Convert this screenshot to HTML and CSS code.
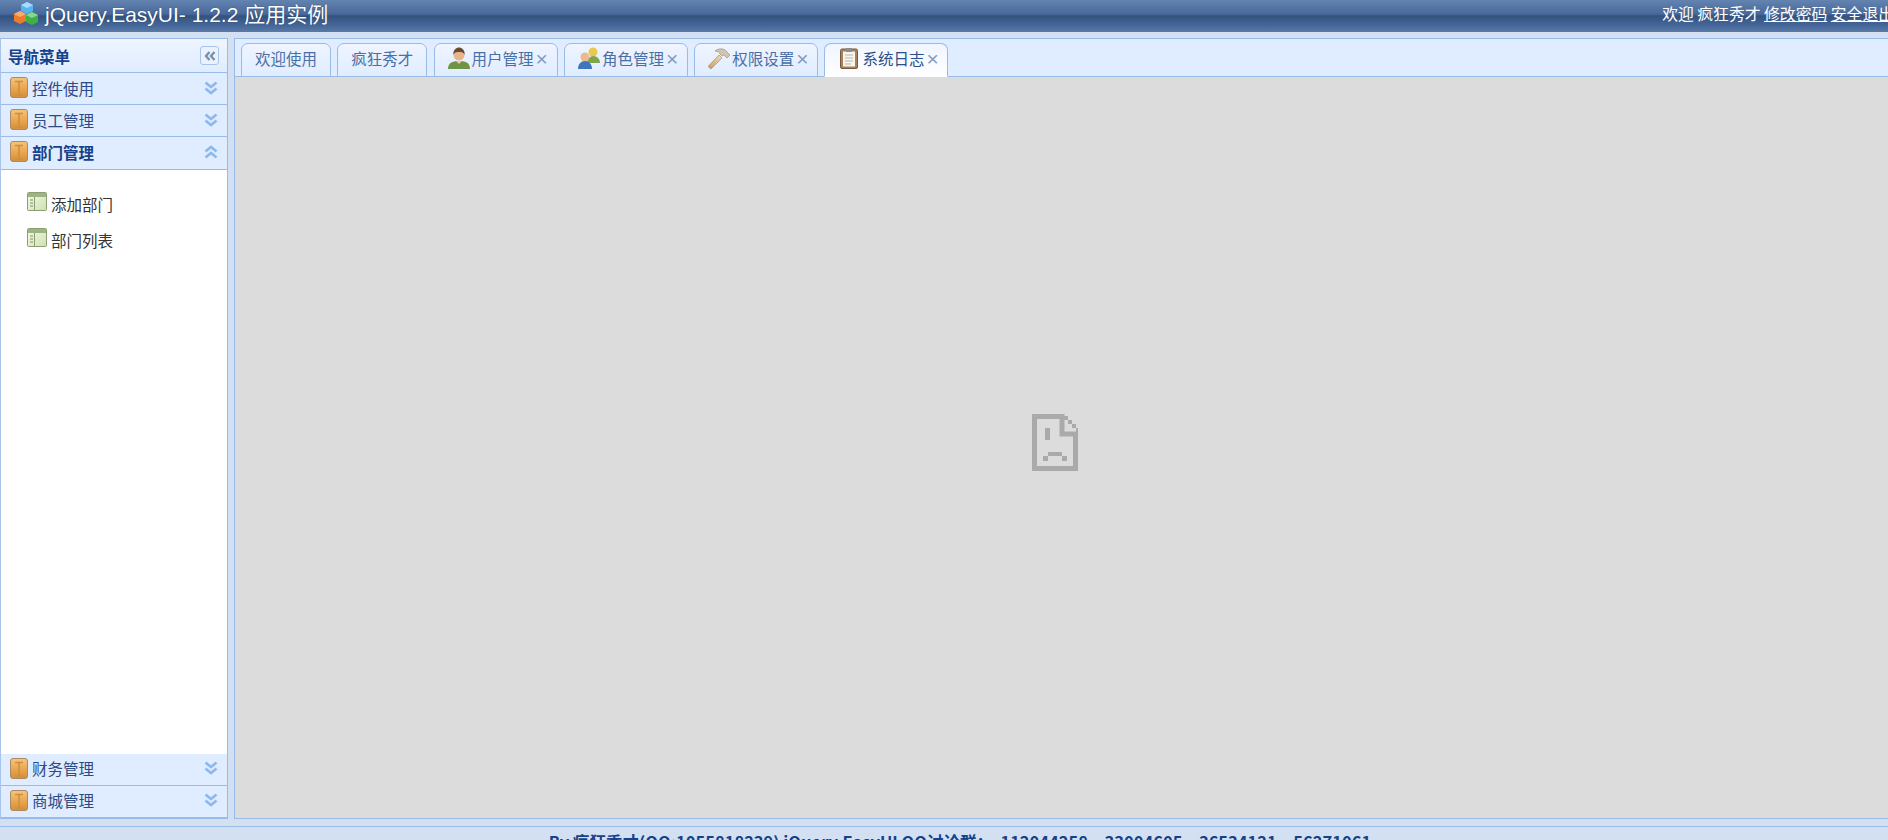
FILE: index.html
```html
<!DOCTYPE html>
<html lang="zh-CN">
<head>
    <meta charset="UTF-8">
    <title>jQuery.EasyUI- 1.2.2 应用实例</title>
    <link rel="stylesheet" href="styles.css">
</head>
<body>
    <svg class="icon-defs" width="0" height="0">
        <defs>
            <linearGradient id="boxFill" x1="0" y1="0" x2="0" y2="1">
                <stop offset="0" stop-color="#f3c67f"/>
                <stop offset="0.6" stop-color="#e8a24a"/>
                <stop offset="1" stop-color="#cf9040"/>
            </linearGradient>
            <linearGradient id="tableFill" x1="0" y1="0" x2="1" y2="1">
                <stop offset="0" stop-color="#f6fae9"/>
                <stop offset="1" stop-color="#cfe0b0"/>
            </linearGradient>
            <linearGradient id="handleFill" x1="0" y1="1" x2="1" y2="0">
                <stop offset="0" stop-color="#c49a68"/>
                <stop offset="1" stop-color="#f3dcb6"/>
            </linearGradient>
            <symbol id="i-box" viewBox="0 0 18 21">
                <rect x="0.5" y="0.5" width="17" height="20" rx="2.5" fill="url(#boxFill)" stroke="#a98a62"/>
                <path d="M5 4.5h8M9 4.5V18" stroke="#cf8c3a" stroke-width="1.5" fill="none"/>
                <path d="M5.5 18h7" stroke="#cf8c3a" fill="none"/>
            </symbol>
            <symbol id="i-table" viewBox="0 0 20 19">
                <rect x="0.5" y="0.5" width="19" height="18" rx="1" fill="url(#tableFill)" stroke="#8aa074"/>
                <rect x="1" y="1" width="18" height="4" fill="#9db583"/>
                <path d="M7.5 5v13" stroke="#8aa074"/>
                <path d="M3 8h3M3 11h3M3 14h3" stroke="#7c9566"/>
            </symbol>
            <symbol id="i-down" viewBox="0 0 14 14">
                <path d="M1.5 1.5L7 6l5.5-4.5M1.5 7.5L7 12l5.5-4.5" fill="none" stroke="#8db8ee" stroke-width="2.6"/>
            </symbol>
            <symbol id="i-up" viewBox="0 0 14 14">
                <path d="M1.5 6.5L7 2l5.5 4.5M1.5 12.5L7 8l5.5 4.5" fill="none" stroke="#8db8ee" stroke-width="2.6"/>
            </symbol>
            <symbol id="i-user" viewBox="0 0 22 22">
                <path d="M0 22c0-6 4-8 11-8s11 2 11 8z" fill="#6f9444"/>
                <path d="M8 14l3 3 3-3z" fill="#e9c9a6"/>
                <circle cx="11" cy="8" r="5.5" fill="#e7b48c"/>
                <path d="M5.5 8c-1-5 3-7.5 5.5-7.5S17.5 3 16.5 8c-1-3-3-3-5.5-3s-4.5 0-5.5 3z" fill="#6b4a33"/>
            </symbol>
            <symbol id="i-users" viewBox="0 0 22 22">
                <circle cx="15" cy="5" r="4.5" fill="#e9c94f"/>
                <path d="M9 16c0-4 3-7 6.5-7s6.5 3 6.5 7z" fill="#7fa54a"/>
                <circle cx="7" cy="10" r="4.5" fill="#ecb98f"/>
                <path d="M0 22c0-5 3-8 7-8s7 3 7 8z" fill="#3d76bd"/>
            </symbol>
            <symbol id="i-hammer" viewBox="0 0 22 22">
                <path d="M0 19.5L11 8l3 3L3 22z" fill="url(#handleFill)" stroke="#a98455" stroke-width="0.6"/>
                <path d="M7 4c4-3 9-3 12 1l3 3-3 3-3-3-2 1-2-2c0-1-2-3-5-3z" fill="#cfc6b0" stroke="#8f8974" stroke-width="0.6"/>
            </symbol>
            <symbol id="i-clip" viewBox="0 0 18 22">
                <rect x="0.5" y="2" width="17" height="19.5" rx="1.5" fill="#a8805a" stroke="#7a5a3c"/>
                <rect x="3" y="4.5" width="12" height="15" fill="#f8f6ec"/>
                <path d="M5 8h8M5 11h8M5 14h8M5 17h6" stroke="#b5b5aa"/>
                <rect x="6" y="1" width="6" height="4" fill="#8c8c8c"/>
            </symbol>
        </defs>
    </svg>

    <!-- 顶部 -->
    <div class="top-bar">
        <div class="brand">
            <svg class="logo" viewBox="0 0 28 26" width="28" height="26">
                <path d="M15 1l6 3v6l-6 3-6-3V4z" fill="#58b4ee"/>
                <path d="M8 10l6 3v7l-6 3-6-3v-7z" fill="#ec7b2e"/>
                <path d="M20 11l6 3v7l-6 3-6-3v-7z" fill="#3fb048"/>
                <path d="M15 1l6 3-6 3-6-3z" fill="#a6dcf7"/>
                <path d="M8 10l6 3-6 3-6-3z" fill="#f7ad6f"/>
                <path d="M20 11l6 3-6 3-6-3z" fill="#86d98c"/>
            </svg>
            <span class="brand-text">jQuery.EasyUI- 1.2.2 应用实例</span>
        </div>
        <div class="user-links">欢迎 疯狂秀才 <a href="#">修改密码</a> <a href="#">安全退出</a></div>
    </div>

    <div class="workspace">
        <!-- 左侧导航 -->
        <div class="side-panel">
            <div class="side-title">
                <span>导航菜单</span>
                <span class="collapse-btn">
                    <svg viewBox="0 0 12 10" width="12" height="10"><path d="M5.5 1L2 5l3.5 4M10.5 1L7 5l3.5 4" fill="none" stroke="#7b8fa8" stroke-width="2.4"/></svg>
                </span>
            </div>
            <div class="acc-head"><svg class="acc-icon"><use href="#i-box"/></svg><span>控件使用</span><svg class="acc-arrow"><use href="#i-down"/></svg></div>
            <div class="acc-head"><svg class="acc-icon"><use href="#i-box"/></svg><span>员工管理</span><svg class="acc-arrow"><use href="#i-down"/></svg></div>
            <div class="acc-head selected"><svg class="acc-icon"><use href="#i-box"/></svg><span>部门管理</span><svg class="acc-arrow"><use href="#i-up"/></svg></div>
            <div class="acc-body">
                <div class="nav-item"><svg class="nav-icon"><use href="#i-table"/></svg><span>添加部门</span></div>
                <div class="nav-item"><svg class="nav-icon"><use href="#i-table"/></svg><span>部门列表</span></div>
            </div>
            <div class="acc-head"><svg class="acc-icon"><use href="#i-box"/></svg><span>财务管理</span><svg class="acc-arrow"><use href="#i-down"/></svg></div>
            <div class="acc-head"><svg class="acc-icon"><use href="#i-box"/></svg><span>商城管理</span><svg class="acc-arrow"><use href="#i-down"/></svg></div>
        </div>

        <!-- 主区域 -->
        <div class="main-panel">
            <div class="tabs">
                <div class="tab plain">欢迎使用</div>
                <div class="tab plain">疯狂秀才</div>
                <div class="tab"><svg class="tab-icon"><use href="#i-user"/></svg>用户管理<span class="tab-close">×</span></div>
                <div class="tab"><svg class="tab-icon"><use href="#i-users"/></svg>角色管理<span class="tab-close">×</span></div>
                <div class="tab"><svg class="tab-icon"><use href="#i-hammer"/></svg>权限设置<span class="tab-close">×</span></div>
                <div class="tab active"><svg class="tab-icon"><use href="#i-clip"/></svg>系统日志<span class="tab-close">×</span></div>
            </div>
            <div class="tab-content">
                <svg class="sad-page" viewBox="0 0 46 57" width="46" height="57">
                    <path d="M2.5 2.5H30V20H43.5V54.5H2.5Z" fill="none" stroke="#aaaaaa" stroke-width="5"/>
                    <path d="M32 2h4v4h-4zM36 6h4v4h-4zM40 10h4v4h-4zM44 14h2v6h-2z" fill="#aaaaaa"/>
                    <path d="M13 14h5v12h-5zM16 38h14v4H16zM11 42h5v5h-5zM30 42h5v5h-5z" fill="#aaaaaa"/>
                </svg>
            </div>
        </div>
    </div>

    <div class="foot-bar">By 疯狂秀才(QQ:1055818239) jQuery.EasyUI QQ讨论群：  112044258、33004605、36534121、56271061</div>
</body>
</html>
```

FILE: styles.css
```css
html, body {
    margin: 0;
    height: 100%;
    overflow: hidden;
}

body {
    display: flex;
    flex-direction: column;
    font-family: "Noto Sans CJK SC", "Liberation Sans", sans-serif;
    font-size: 15.5px;
    background: #d2e0f2;
}

.icon-defs {
    position: absolute;
}

/* 顶部 */
.top-bar {
    flex: none;
    height: 32px;
    display: flex;
    align-items: center;
    justify-content: space-between;
    color: #fff;
    background: linear-gradient(#6384b0 0, #48699a 14px, #33527f 16px, #46689a 26px, #5a7aa6 32px);
}

.brand {
    display: flex;
    align-items: center;
    margin-top: -4px;
    padding-left: 12px;
}

.logo {
    margin-right: 5px;
}

.brand-text {
    font-size: 21px;
    margin-bottom: 3px;
    font-family: "Liberation Sans", "Noto Sans CJK SC", sans-serif;
    white-space: nowrap;
    text-shadow: 0 0 1px #1d3358;
}

.user-links {
    font-size: 15.8px;
    white-space: pre;
    margin: -5px -6px 0 0;
}

.user-links a {
    color: #fff;
}

/* 布局 */
.workspace {
    flex: none;
    height: 781px;
    margin: 6px -2px 0 0;
    display: flex;
    gap: 6px;
}

.side-panel {
    width: 226px;
    display: flex;
    flex-direction: column;
    background: #fff;
    border: 1px solid #99bbe8;
    border-left-color: #a9c4e8;
}

.side-title {
    height: 33px;
    flex: none;
    display: flex;
    align-items: center;
    justify-content: space-between;
    padding: 0 8px 0 7px;
    font-weight: bold;
    color: #15428b;
    border-bottom: 1px solid #99bbe8;
    background: linear-gradient(#eff5ff, #e0ecff);
}

.collapse-btn {
    width: 17px;
    height: 17px;
    display: flex;
    align-items: center;
    justify-content: center;
    border: 1px solid #a9c4e8;
    border-radius: 3px;
    background: #eaf2ff;
}

.acc-head {
    height: 29.2px;
    flex: none;
    display: flex;
    align-items: center;
    padding: 0 9px 2px 9px;
    color: #2d4a85;
    background: #e0ecff;
    border-bottom: 1px solid #99bbe8;
}

.acc-head.selected {
    font-weight: bold;
    color: #15428b;
}

.acc-icon {
    width: 18px;
    height: 21px;
    margin-right: 4px;
}

.acc-arrow {
    width: 14px;
    height: 14px;
    margin-left: auto;
}

.acc-body {
    flex: 1;
    padding-top: 16px;
    background: #fff;
}

.nav-item {
    height: 36px;
    display: flex;
    align-items: center;
    padding-left: 26px;
    color: #333;
}

.nav-icon {
    width: 20px;
    height: 19px;
    margin: -4px 4px 0 0;
}

/* 选项卡 */
.main-panel {
    flex: 1;
    display: flex;
    flex-direction: column;
    border: 1px solid #99bbe8;
}

.tabs {
    height: 37px;
    flex: none;
    display: flex;
    align-items: flex-end;
    gap: 6.3px;
    padding-left: 6px;
    background: #e0ecff;
    border-bottom: 1px solid #99bbe8;
}

.tab {
    width: 124px;
    height: 34px;
    margin-bottom: -1px;
    box-sizing: border-box;
    display: flex;
    align-items: center;
    padding: 0 0 4px 13px;
    color: #4a6fa5;
    white-space: nowrap;
    border: 1px solid #99bbe8;
    border-radius: 7px 7px 0 0;
    background: linear-gradient(#eff5ff, #e0ecff);
}

.tab.plain {
    width: 90px;
    justify-content: center;
    padding-left: 0;
}

.tab.active {
    color: #2b4f86;
    background: linear-gradient(#eff5ff, #fff);
    border-bottom-color: #fff;
}

.tab-icon {
    width: 22px;
    height: 22px;
    margin-right: 2px;
}

.tab-close {
    font-family: "Liberation Sans", sans-serif;
    font-size: 21px;
    line-height: 1;
    margin-left: 2px;
    color: #7f9bc4;
}

.tab-content {
    flex: 1;
    display: flex;
    align-items: center;
    justify-content: center;
    background: #dcdcdc;
}

.sad-page {
    margin: 0 14px 10px 0;
    filter: blur(0.5px);
}

/* 底部 */
.foot-bar {
    flex: none;
    height: 40px;
    margin-top: 7px;
    padding: 3px 0 0 32px;
    box-sizing: border-box;
    text-align: center;
    font-size: 16.5px;
    font-weight: bold;
    white-space: pre;
    color: #15428b;
    background: #d2e0f2;
    border-top: 1px solid #99bbe8;
}
```
